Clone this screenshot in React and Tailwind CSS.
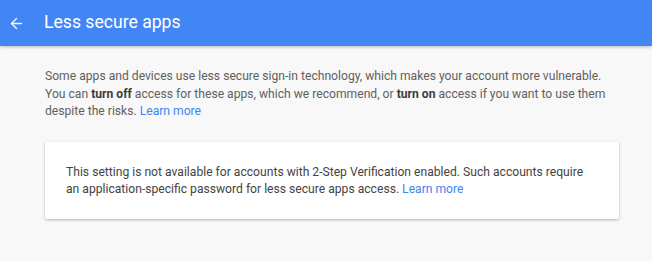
import { ArrowLeft } from "lucide-react";

const App = () => {
  return (
    <div className="w-[652px] h-[261px] bg-[#f8f8f8] font-['Roboto',sans-serif] overflow-hidden">
      {/* Header */}
      <div className="h-[46px] bg-[#4285f4] flex items-center shadow-[0_1px_3px_rgba(0,0,0,0.25)] relative">
        <div className="w-[44px] pl-[8px]">
          <ArrowLeft size={17} strokeWidth={2} className="text-white/90" />
        </div>
        <h1 className="text-white text-[17.6px] leading-none">Less secure apps</h1>
      </div>

      {/* Body */}
      <div className="pl-[45px] pr-[33px] pt-[22px]">
        <p className="text-[12.13px] leading-[17.5px] text-[#616161] whitespace-nowrap">
          Some apps and devices use less secure sign-in technology, which makes your account more vulnerable.
          <br />
          You can <b className="font-bold text-[#3c3c3c]">turn off</b> access for these apps, which we recommend, or{" "}
          <b className="font-bold text-[#3c3c3c]">turn on</b> access if you want to use them
          <br />
          despite the risks. <a className="text-[#4285f4]">Learn more</a>
        </p>

        <div className="mt-[21px] bg-white rounded-[2px] shadow-[0_1px_3px_rgba(0,0,0,0.28)] px-[21px] pt-[22px] pb-[20px]">
          <p className="text-[12.13px] leading-[17.5px] text-[#444] whitespace-nowrap">
            This setting is not available for accounts with 2-Step Verification enabled. Such accounts require
            <br />
            an application-specific password for less secure apps access.{" "}
            <a className="text-[#4285f4]">Learn more</a>
          </p>
        </div>
      </div>
    </div>
  );
};

export default App;
